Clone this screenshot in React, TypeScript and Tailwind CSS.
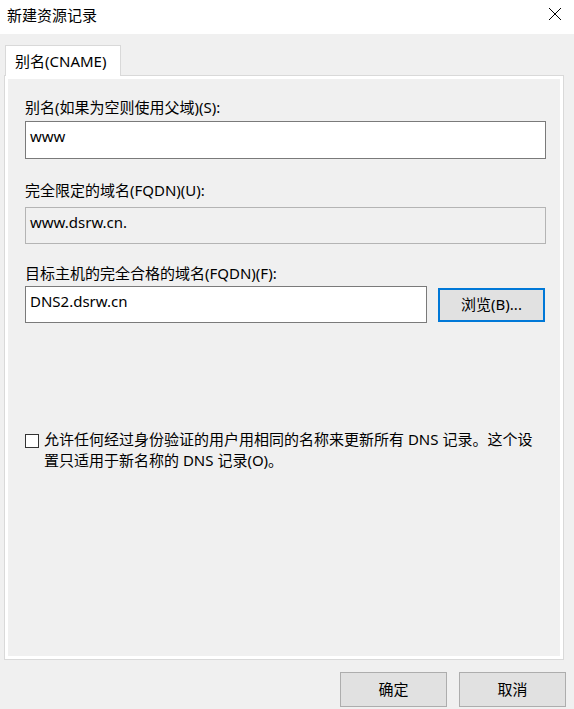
const font = { fontFamily: '"Noto Sans", "Noto Sans CJK SC", sans-serif' };

function Field({ label, value, readOnly }: { label: string; value: string; readOnly?: boolean }) {
  return (
    <div
      className={`h-[37px] border px-[4px] pt-[4px] text-[15px] leading-[20px] text-black ${
        readOnly ? 'border-[#b4b4b4] bg-[#f0f0f0]' : 'border-[#7a7a7a] bg-white'
      }`}
      aria-label={label}
    >
      {value}
    </div>
  );
}

function WinButton({ children, focused }: { children: string; focused?: boolean }) {
  return (
    <button
      className={`flex h-[35px] w-[107px] items-center justify-center bg-[#e1e1e1] text-[15px] text-black ${
        focused ? 'border-2 border-[#0078d7]' : 'border border-[#adadad]'
      }`}
    >
      {children}
    </button>
  );
}

export default function App() {
  return (
    <div className="flex h-[709px] w-[574px] flex-col bg-[#f0f0f0] text-black" style={font}>
      {/* title bar */}
      <div className="flex h-[34px] shrink-0 items-center justify-between bg-white pl-[7px] pr-[12px]">
        <div className="text-[15px] leading-[20px] pb-[4px]">新建资源记录</div>
        <svg width="14" height="14" viewBox="0 0 14 14" className="mb-[6px]">
          <path d="M1 1 L13 13 M13 1 L1 13" stroke="#000" strokeWidth="1" fill="none" />
        </svg>
      </div>

      <div className="px-[4px] pt-[11px]">
        {/* tab strip */}
        <div className="flex">
          <div className="relative z-10 -mb-px ml-[1px] flex h-[31px] w-[116px] items-center border border-b-0 border-[#d9d9d9] bg-white pl-[9px] text-[15px] leading-[20px]">
            别名(CNAME)
          </div>
        </div>

        {/* tab page */}
        <div className="h-[585px] w-[560px] border border-[#d9d9d9] bg-white p-[3px]">
          <div className="h-full bg-[#f0f0f0] px-[17px]">
            <div className="pt-[18px] text-[15px] leading-[20px]">别名(如果为空则使用父域)(S):</div>
            <div className="mt-[4px] w-[521px]">
              <div className="h-[38px] border border-[#7a7a7a] bg-white px-[4px] pt-[4px] text-[15px] leading-[20px]">
                www
              </div>
            </div>

            <div className="mt-[21px] text-[15px] leading-[20px]">完全限定的域名(FQDN)(U):</div>
            <div className="mt-[7px] w-[521px]">
              <Field label="fqdn" value="www.dsrw.cn." readOnly />
            </div>

            <div className="mt-[19px] text-[15px] leading-[20px]">目标主机的完全合格的域名(FQDN)(F):</div>
            <div className="mt-[3px] flex w-[521px] items-center gap-[11px]">
              <div className="w-[402px]">
                <Field label="target" value="DNS2.dsrw.cn" />
              </div>
              <button className="flex h-[34px] w-[107px] items-center justify-center border-2 border-[#0078d7] bg-[#e1e1e1] text-[15px] text-black">
                浏览(B)...
              </button>
            </div>

            <div className="mt-[106px] flex gap-[5px]">
              <div className="mt-[5px] h-[14px] w-[14px] shrink-0 border border-[#333333] bg-white" />
              <div className="text-[15px] leading-[21px]">
                允许任何经过身份验证的用户用相同的名称来更新所有 DNS 记录。这个设
                <br />
                置只适用于新名称的 DNS 记录(O)。
              </div>
            </div>
          </div>
        </div>
      </div>

      {/* footer */}
      <div className="flex justify-end gap-[12px] pr-[8px] pt-[12px]">
        <WinButton>确定</WinButton>
        <WinButton>取消</WinButton>
      </div>
    </div>
  );
}
